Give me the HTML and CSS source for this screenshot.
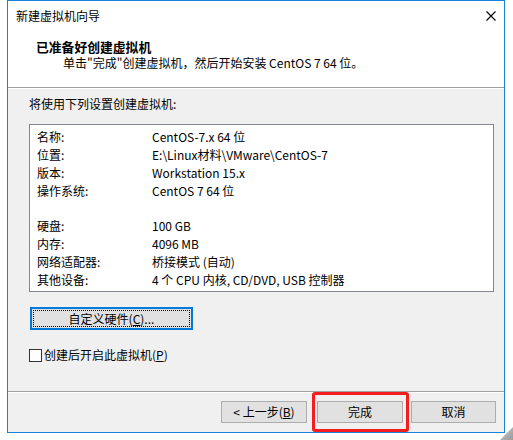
FILE: index.html
```html
<!DOCTYPE html>
<html lang="zh-CN">
<head>
<meta charset="utf-8">
<title>新建虚拟机向导</title>
<link rel="stylesheet" href="styles.css">
</head>
<body>
<div class="window">
  <div class="header">
    <div class="titlebar">
      <span class="title">新建虚拟机向导</span>
      <svg class="close" width="10" height="10" viewBox="0 0 10 10"><path d="M0.5 0.5 L9.5 9.5 M9.5 0.5 L0.5 9.5" stroke="#000" stroke-width="1.1" fill="none"/></svg>
    </div>
    <div class="heading">已准备好创建虚拟机</div>
    <div class="subtitle">单击"完成"创建虚拟机，然后开始安装 CentOS 7 64 位。</div>
  </div>
  <div class="content">
    <div class="intro">将使用下列设置创建虚拟机:</div>
    <div class="summary">
      <div class="row"><span class="k">名称:</span><span class="v">CentOS-7.x 64 位</span></div>
      <div class="row"><span class="k">位置:</span><span class="v">E:\Linux材料\VMware\CentOS-7</span></div>
      <div class="row"><span class="k">版本:</span><span class="v">Workstation 15.x</span></div>
      <div class="row"><span class="k">操作系统:</span><span class="v">CentOS 7 64 位</span></div>
      <div class="row"></div>
      <div class="row"><span class="k">硬盘:</span><span class="v">100 GB</span></div>
      <div class="row"><span class="k">内存:</span><span class="v">4096 MB</span></div>
      <div class="row"><span class="k">网络适配器:</span><span class="v">桥接模式 (自动)</span></div>
      <div class="row"><span class="k">其他设备:</span><span class="v">4 个 CPU 内核, CD/DVD, USB 控制器</span></div>
    </div>
    <div class="hw-btn"><span class="focus">自定义硬件(<u>C</u>)...</span></div>
    <div class="check"><span class="box"></span><span>创建后开启此虚拟机(<u>P</u>)</span></div>
  </div>
  <div class="footer">
    <div class="btn back">&lt; 上一步(<u>B</u>)</div>
    <div class="btn finish">完成</div>
    <div class="btn cancel">取消</div>
  </div>
  <div class="highlight"></div>
</div>
<div class="grip"></div>
</body>
</html>
```
FILE: styles.css
```css
html, body {
  margin: 0;
  padding: 0;
  background: #ffffff;
  width: 513px;
  height: 440px;
  overflow: hidden;
  position: relative;
  font-family: "Noto Sans CJK SC", "Liberation Sans", sans-serif;
  font-size: 12px;
  color: #000;
}
u { text-decoration: underline; text-underline-offset: 1px; }
.window {
  position: relative;
  margin-left: 7px;
  width: 498px;
  height: 433px;
  box-sizing: border-box;
  border: 1px solid #1883d7;
  background: #f0f0f0;
  display: flex;
  flex-direction: column;
}
.header {
  background: #fff;
  height: 87px;
  box-sizing: border-box;
  border-bottom: 1px solid #a0a0a0;
}
.titlebar {
  height: 30px;
  display: flex;
  align-items: center;
  justify-content: space-between;
  padding: 0 8px 0 8px;
}
.title { line-height: 16px; }
.heading {
  margin-top: 8px;
  padding-left: 28px;
  font-weight: bold;
  font-size: 12.8px;
  line-height: 16px;
}
.subtitle {
  padding-left: 55px;
  line-height: 16px;
}
.content {
  height: 304px;
  box-sizing: border-box;
  border-top: 1px solid #fff;
  border-bottom: 1px solid #a0a0a0;
  padding: 7px 10px 0 21px;
}
.intro { line-height: 16px; }
.summary {
  margin-top: 12px;
  height: 168px;
  box-sizing: border-box;
  border: 1px solid #828790;
  background: #fff;
  padding: 3px 0 0 7px;
}
.row {
  display: flex;
  height: 17.9px;
  line-height: 18px;
  white-space: nowrap;
}
.k { width: 115px; flex: none; }
.hw-btn {
  margin-top: 15px;
  margin-left: 1px;
  width: 163px;
  height: 23px;
  box-sizing: border-box;
  border: 2px solid #0078d7;
  background: #e1e1e1;
  padding: 1px;
  display: flex;
}
.focus {
  flex: 1;
  border: 1px dotted #000;
  display: flex;
  align-items: center;
  justify-content: center;
  line-height: 14px;
}
.check {
  margin-top: 17px;
  display: flex;
  align-items: center;
  gap: 2px;
  line-height: 16px;
}
.box {
  width: 13px;
  height: 13px;
  box-sizing: border-box;
  border: 1px solid #333;
  background: #fff;
}
.footer {
  border-top: 1px solid #fff;
  flex: 1;
  display: flex;
  justify-content: flex-end;
  padding: 8px 8px 0 0;
  gap: 10px;
}
.btn {
  width: 86px;
  height: 22px;
  box-sizing: border-box;
  border: 1px solid #adadad;
  background: #e1e1e1;
  display: flex;
  align-items: center;
  justify-content: center;
  line-height: 14px;
}
.btn.cancel { width: 85px; margin-left: -2px; }
.highlight {
  position: absolute;
  left: 304px;
  top: 391px;
  width: 97px;
  height: 40px;
  box-sizing: border-box;
  border: 3px solid #f41e1e;
  border-radius: 3px;
}
.grip {
  position: absolute;
  right: 0;
  bottom: 0;
  width: 13px;
  height: 13px;
  background: linear-gradient(135deg, #c8c8c8, #9a9a9a);
  clip-path: polygon(100% 0, 100% 100%, 0 100%);
}
```
